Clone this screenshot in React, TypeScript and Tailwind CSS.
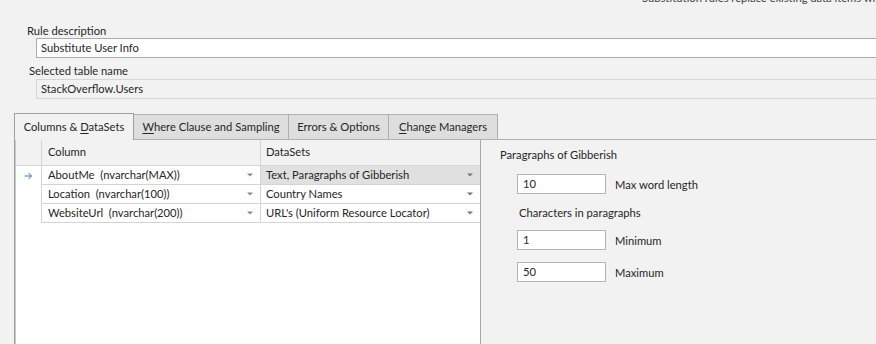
import React from 'react';

const font = { fontFamily: 'Lato, "Noto Sans", sans-serif' };

const DropArrow = ({ tint = false }: { tint?: boolean }) => (
  <svg width="6" height="4" viewBox="0 0 6 4" className="shrink-0">
    <path d="M0 0.5h6L3 3.5z" fill={tint ? '#8e6a78' : '#8a8a8a'} />
  </svg>
);

const RowArrow = () => (
  <svg width="9" height="8" viewBox="0 0 9 8">
    <path d="M0.5 4h7M4.5 1l3 3-3 3" fill="none" stroke="#3b7ad0" strokeWidth="1" />
  </svg>
);

const rows = [
  { col: 'AboutMe  (nvarchar(MAX))', ds: 'Text, Paragraphs of Gibberish', current: true },
  { col: 'Location  (nvarchar(100))', ds: 'Country Names', current: false },
  { col: 'WebsiteUrl  (nvarchar(200))', ds: "URL's (Uniform Resource Locator)", current: false },
];

const TabLabel = ({ pre, u, post }: { pre?: string; u?: string; post: string }) => (
  <span className="whitespace-nowrap">
    {pre}
    {u && <span className="underline underline-offset-2">{u}</span>}
    {post}
  </span>
);

const NumberField = ({ value, label }: { value: string; label: string }) => (
  <div className="flex items-center h-[20px]">
    <div className="w-[89px] h-[20px] bg-white border border-[#b4b4b4] flex items-center pl-[5px]">
      {value}
    </div>
    <span className="ml-[9px] mt-[2px]">{label}</span>
  </div>
);

export default function App() {
  return (
    <div className="w-[876px] h-[344px] bg-[#f2f2f2] overflow-hidden text-[#262626] text-[11.2px]" style={font}>
      {/* clipped hint line */}
      <div className="h-[23px] pl-[642px] overflow-hidden">
        <div className="whitespace-nowrap leading-[12px] -mt-[8px] text-[#444]">
          Substitution rules replace existing data items with generated values.
        </div>
      </div>

      <div className="h-[15px] leading-[15px] pl-[27px]">Rule description</div>
      <div className="ml-[36px] w-[860px] h-[20px] bg-white border border-[#acacac] flex items-center pl-[4px]">
        Substitute User Info
      </div>

      <div className="mt-[5px] h-[16px] leading-[16px] pl-[29px]">Selected table name</div>
      <div className="ml-[36px] w-[860px] h-[20px] border border-[#d6d6d6] flex items-center pl-[4px]">
        StackOverflow.Users
      </div>

      {/* tabs */}
      <div className="mt-[14px] pl-[14px] flex items-end h-[27px]">
        <div className="w-[120px] h-[27px] border-l border-t border-r border-[#a0a0a0] bg-[#f2f2f2] flex items-center justify-center">
          <TabLabel pre="Columns & " u="D" post="ataSets" />
        </div>
        <div className="w-[155px] h-[26px] border-t border-r border-b border-[#b0b0b0] bg-[#dedede] flex items-center justify-center">
          <TabLabel u="W" post="here Clause and Sampling" />
        </div>
        <div className="w-[100px] h-[26px] border-t border-r border-b border-[#b0b0b0] bg-[#dedede] flex items-center justify-center">
          <TabLabel post="Errors & Options" />
        </div>
        <div className="w-[109px] h-[26px] border-t border-r border-b border-[#b0b0b0] bg-[#dedede] flex items-center justify-center">
          <TabLabel u="C" post="hange Managers" />
        </div>
        <div className="flex-1 border-b border-[#b0b0b0]" />
      </div>

      {/* tab body */}
      <div className="ml-[14px] flex h-[204px] border-l border-[#a0a0a0]">
        <div className="w-[466px] bg-white border-l border-r border-[#c8c8c8] border-r-[#a8a8a8]">
          <div className="flex h-[26px] bg-[#f2f2f2] border-b border-[#d4d4d4]">
            <div className="w-[25px]" />
            <div className="w-[219px] border-l border-[#d4d4d4] flex items-center pl-[6px]">Column</div>
            <div className="flex-1 border-l border-[#d4d4d4] flex items-center pl-[5px]">DataSets</div>
          </div>
          {rows.map((r) => (
            <div key={r.col} className="flex h-[19px]">
              <div className="w-[25px] flex items-center justify-center">
                {r.current && <RowArrow />}
              </div>
              <div className="w-[219px] border-l border-b border-[#d4d4d4] flex items-center justify-between pl-[6px] pr-[7px]">
                <span className="whitespace-pre">{r.col}</span>
                <DropArrow />
              </div>
              <div
                className={
                  'flex-1 border-l border-b border-[#d4d4d4] flex items-center justify-between pl-[5px] pr-[7px] ' +
                  (r.current ? 'bg-[#e0e0e0]' : '')
                }
              >
                <span className="whitespace-pre">{r.ds}</span>
                <DropArrow tint />
              </div>
            </div>
          ))}
        </div>

        <div className="flex-1 pl-[19px]">
          <div className="mt-[7px] h-[16px] leading-[16px]">Paragraphs of Gibberish</div>
          <div className="mt-[11px] pl-[17px] flex flex-col">
            <NumberField value="10" label="Max word length" />
            <div className="mt-[11px] h-[16px] leading-[16px] pl-[2px]">Characters in paragraphs</div>
            <div className="mt-[9px]">
              <NumberField value="1" label="Minimum" />
            </div>
            <div className="mt-[12px]">
              <NumberField value="50" label="Maximum" />
            </div>
          </div>
        </div>
      </div>
    </div>
  );
}
